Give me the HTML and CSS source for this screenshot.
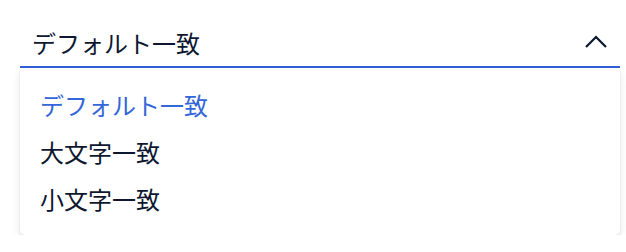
FILE: index.html
```
<!DOCTYPE html>
<html lang="ja">
<head>
<meta charset="utf-8">
<link rel="stylesheet" href="styles.css">
</head>
<body>
<div class="select">
  <div class="field">
    <span class="value">デフォルト一致</span>
    <svg class="chev" width="24" height="24" viewBox="0 0 24 24"><path d="M2 17 L12 7 L22 17" fill="none" stroke="#0d1830" stroke-width="2.2"/></svg>
  </div>
  <ul class="menu">
    <li class="item active">デフォルト一致</li>
    <li class="item">大文字一致</li>
    <li class="item">小文字一致</li>
  </ul>
</div>
</body>
</html>
```
FILE: styles.css
```
html, body { margin: 0; padding: 0; background: #fff; }
body { font-family: "Noto Sans CJK JP", "Noto Sans", sans-serif; color: #0d1830; }
.select { padding: 20px 6px 0 20px; width: 600px; }
.field {
  display: flex; align-items: center; justify-content: space-between;
  height: 46px; padding: 0 12px 0 12px;
  border-bottom: 2px solid #2e5fd6;
  font-size: 24px;
}
.value { line-height: 1; }
.chev { display: block; margin-top: -2px; }
.menu {
  list-style: none; margin: 2px 0 0 0; padding: 11px 0 13px 0;
  background: #fff; border-radius: 0 0 5px 5px;
  box-shadow: 0 4px 10px rgba(20, 30, 80, 0.10), 0 1px 3px rgba(20,30,80,0.08);
}
.item { font-size: 24px; line-height: 47px; padding: 0 20px; }
.item.active { color: #3366d9; }
```
